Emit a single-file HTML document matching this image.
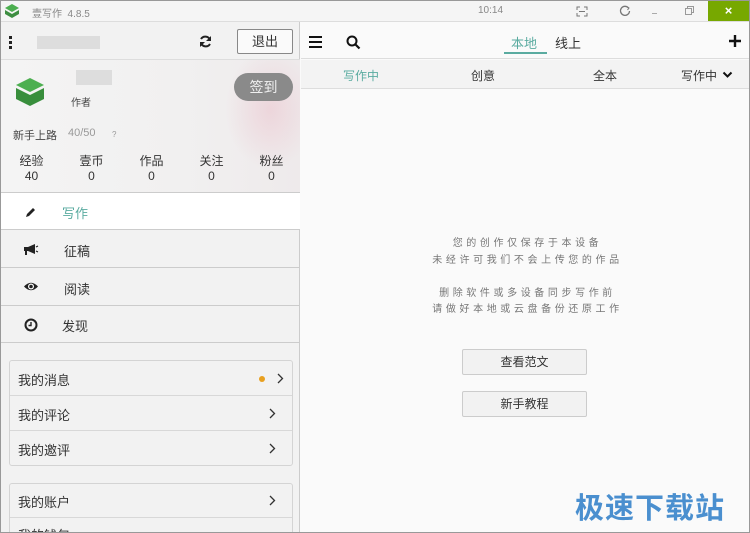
<!DOCTYPE html>
<html><head><meta charset="utf-8"><style>
*{box-sizing:border-box;margin:0;padding:0}
html,body{width:750px;height:533px;overflow:hidden}
body{font-family:"Liberation Sans","Noto Sans CJK SC",sans-serif;background:#fafafa;color:#333}
#w{position:relative;width:750px;height:533px;overflow:hidden}
.abs{position:absolute}
</style></head><body><div id="w">
<!-- title bar -->
<div class="abs" style="left:1px;top:1px;width:748px;height:21px;background:#f5f5f5;border-bottom:1px solid #ddd"></div>
<svg class="abs" style="left:4px;top:3px" width="16" height="16"><path d="M8 1L15 5L8 9L1 5Z" fill="#4caf50"/><path d="M1 7L8 11L15 7V11L8 15L1 11Z" fill="#3e8e41"/></svg>
<div class="abs" style="left:32px;top:5px;font-size:10px;color:#888">壹写作 &nbsp;4.8.5</div>
<div class="abs" style="left:478px;top:5px;font-size:10px;color:#888">10:14</div>
<svg class="abs" style="left:576px;top:6px" width="12" height="11"><path d="M1 4V1H4M8 1H11V4M11 7V10H8M4 10H1V7M3 5.5H9" stroke="#777" fill="none"/></svg>
<svg class="abs" style="left:619px;top:5px" width="12" height="12"><path d="M9.5 3A4.5 4.5 0 1 0 10.5 6" stroke="#777" stroke-width="1.3" fill="none"/><path d="M7.5 1.5L10 3L8.5 5" stroke="#777" fill="none"/></svg>
<div class="abs" style="left:652px;top:13px;width:5px;height:1px;background:#aaa"></div>
<svg class="abs" style="left:685px;top:6px" width="9" height="9"><path d="M0.5 2.5H6.5V8.5H0.5ZM2.5 2.5V0.5H8.5V6.5H6.5" stroke="#999" fill="none"/></svg>
<div class="abs" style="left:708px;top:1px;width:41px;height:20px;background:#77a800;color:#fff;font-size:13px;text-align:center;line-height:20px;font-weight:bold">×</div>
<!-- left panel -->
<div class="abs" style="left:1px;top:22px;width:299px;height:511px;background:#f2f2f2;border-right:1px solid #ccc"></div>
<div class="abs" style="left:1px;top:59px;width:299px;height:1px;background:#ddd"></div>
<div class="abs" style="left:9px;top:36px;width:3px;height:3px;background:#222;box-shadow:0 5px 0 #222,0 10px 0 #222"></div>
<div class="abs" style="left:37px;top:36px;width:63px;height:13px;background:#ddd"></div>
<svg class="abs" style="left:199px;top:35px" width="13" height="13"><path d="M11 5A5 5 0 0 0 2 4M2 8A5 5 0 0 0 11 9" stroke="#222" stroke-width="2" fill="none"/><path d="M12 1V6H7ZM1 12V7H6Z" fill="#222"/></svg>
<div class="abs" style="left:237px;top:29px;width:56px;height:25px;border:1px solid #888;border-radius:2px;background:#fafafa;font-size:13px;text-align:center;line-height:23px">退出</div>
<!-- profile -->
<div class="abs" style="left:1px;top:60px;width:299px;height:132px;background:linear-gradient(90deg,#f4f4f4 0%,#f1f0f0 60%,#eeeaeb 100%)"></div>
<div class="abs" style="left:225px;top:60px;width:75px;height:110px;background:radial-gradient(ellipse at 60% 45%,rgba(235,195,205,.55) 0%,rgba(240,200,210,0) 70%)"></div>
<svg class="abs" style="left:15px;top:77px" width="30" height="30"><path d="M15 1L29 8L15 15L1 8Z" fill="#4caf50"/><path d="M1 11L15 18L29 11V22L15 29L1 22Z" fill="#388e3c"/></svg>
<div class="abs" style="left:76px;top:70px;width:36px;height:15px;background:#ddd"></div>
<div class="abs" style="left:71px;top:94px;font-size:10px;color:#444">作者</div>
<div class="abs" style="left:234px;top:73px;width:59px;height:28px;border-radius:14px;background:#8a8a8a;color:#f0f0f0;font-size:14px;text-align:center;line-height:28px">签到</div>
<div class="abs" style="left:13px;top:127px;font-size:11px;color:#444">新手上路</div>
<div class="abs" style="left:68px;top:127px;font-size:11px;color:#999">40/50</div>
<div class="abs" style="left:112px;top:130px;font-size:8px;color:#999">?</div>
<div class="abs" style="left:0;top:154px;width:300px;font-size:12px;color:#333;line-height:15px">
<div class="abs" style="left:19px;width:25px;text-align:center">经验<br>40</div>
<div class="abs" style="left:79px;width:25px;text-align:center">壹币<br>0</div>
<div class="abs" style="left:139px;width:25px;text-align:center">作品<br>0</div>
<div class="abs" style="left:199px;width:25px;text-align:center">关注<br>0</div>
<div class="abs" style="left:259px;width:25px;text-align:center">粉丝<br>0</div>
</div>
<div class="abs" style="left:1px;top:192px;width:299px;height:1px;background:#ccc"></div>
<!-- menu -->
<div class="abs" style="left:1px;top:193px;width:299px;height:37px;background:#fff;border-bottom:1px solid #ccc"></div>
<svg class="abs" style="left:24px;top:206px" width="13" height="13"><path d="M2 11L3 8L9 2L11 4L5 10Z" fill="#222"/></svg>
<div class="abs" style="left:62px;top:203px;font-size:13px;color:#5aaba0">写作</div>
<div class="abs" style="left:1px;top:230px;width:299px;height:38px;border-bottom:1px solid #ccc"></div>
<svg class="abs" style="left:23px;top:243px" width="16" height="13"><path d="M1 4H5L12 1V11L5 8H4V12H2V8H1Z" fill="#222"/><path d="M13 4L15 3M13 8L15 9" stroke="#222"/></svg>
<div class="abs" style="left:64px;top:241px;font-size:13px">征稿</div>
<div class="abs" style="left:1px;top:268px;width:299px;height:38px;border-bottom:1px solid #ccc"></div>
<svg class="abs" style="left:23px;top:281px" width="16" height="11"><path d="M1 5.5Q8 -2 15 5.5Q8 13 1 5.5Z" fill="#222"/><circle cx="8" cy="5.5" r="3" fill="#fff"/><circle cx="8" cy="5.5" r="1.8" fill="#222"/></svg>
<div class="abs" style="left:64px;top:279px;font-size:13px">阅读</div>
<div class="abs" style="left:1px;top:306px;width:299px;height:37px;border-bottom:1px solid #ccc"></div>
<svg class="abs" style="left:24px;top:318px" width="14" height="14"><circle cx="7" cy="7" r="5.5" stroke="#222" stroke-width="2" fill="none"/><path d="M7 4V7.5H4.5" stroke="#222" stroke-width="1.4" fill="none"/></svg>
<div class="abs" style="left:62px;top:316px;font-size:13px">发现</div>
<!-- cards -->
<div class="abs" style="left:9px;top:360px;width:284px;height:106px;border:1px solid #d4d4d4;border-radius:3px;background:#f2f2f2"></div>
<div class="abs" style="left:10px;top:395px;width:282px;height:1px;background:#d8d8d8"></div>
<div class="abs" style="left:10px;top:430px;width:282px;height:1px;background:#d8d8d8"></div>
<div class="abs" style="left:18px;top:370px;font-size:13px">我的消息</div>
<div class="abs" style="left:259px;top:376px;width:6px;height:6px;border-radius:50%;background:#e8a020"></div>
<svg class="abs" style="left:277px;top:373px" width="7" height="11"><path d="M1 1L5.5 5.5L1 10" stroke="#333" stroke-width="1.3" fill="none"/></svg>
<div class="abs" style="left:18px;top:405px;font-size:13px">我的评论</div>
<svg class="abs" style="left:269px;top:408px" width="7" height="11"><path d="M1 1L5.5 5.5L1 10" stroke="#333" stroke-width="1.3" fill="none"/></svg>
<div class="abs" style="left:18px;top:440px;font-size:13px">我的邀评</div>
<svg class="abs" style="left:269px;top:443px" width="7" height="11"><path d="M1 1L5.5 5.5L1 10" stroke="#333" stroke-width="1.3" fill="none"/></svg>
<div class="abs" style="left:9px;top:483px;width:284px;height:60px;border:1px solid #d4d4d4;border-radius:3px;background:#f2f2f2"></div>
<div class="abs" style="left:10px;top:517px;width:282px;height:1px;background:#d8d8d8"></div>
<div class="abs" style="left:18px;top:492px;font-size:13px">我的账户</div>
<svg class="abs" style="left:269px;top:495px" width="7" height="11"><path d="M1 1L5.5 5.5L1 10" stroke="#333" stroke-width="1.3" fill="none"/></svg>
<div class="abs" style="left:18px;top:525px;font-size:13px">我的钱包</div>
<!-- right -->
<div class="abs" style="left:301px;top:22px;width:448px;height:37px;background:#fafafa;border-bottom:1px solid #ddd"></div>
<div class="abs" style="left:309px;top:36px;width:13px;height:2px;background:#111;box-shadow:0 5px 0 #111,0 10px 0 #111"></div>
<svg class="abs" style="left:346px;top:35px" width="15" height="15"><circle cx="6" cy="6" r="4.5" stroke="#111" stroke-width="2" fill="none"/><path d="M9.5 9.5L13.5 13.5" stroke="#111" stroke-width="2.2"/></svg>
<div class="abs" style="left:511px;top:33px;font-size:13px;color:#5aaba0">本地</div>
<div class="abs" style="left:504px;top:52px;width:43px;height:2px;background:#5aaba0"></div>
<div class="abs" style="left:555px;top:33px;font-size:13px">线上</div>
<svg class="abs" style="left:729px;top:35px" width="12" height="12"><path d="M6 0V12M0 6H12" stroke="#111" stroke-width="2.4"/></svg>
<div class="abs" style="left:301px;top:60px;width:448px;height:29px;background:#f3f3f3;border-bottom:1px solid #ddd"></div>
<div class="abs" style="left:343px;top:67px;font-size:12px;color:#5aaba0">写作中</div>
<div class="abs" style="left:471px;top:67px;font-size:12px">创意</div>
<div class="abs" style="left:593px;top:67px;font-size:12px">全本</div>
<div class="abs" style="left:681px;top:67px;font-size:12px">写作中</div>
<svg class="abs" style="left:722px;top:71px" width="11" height="8"><path d="M1.5 1.5L5.5 5.5L9.5 1.5" stroke="#111" stroke-width="2" fill="none"/></svg>
<div class="abs" style="left:390px;top:236px;width:272px;text-align:center;font-size:10px;color:#777;letter-spacing:3.6px;line-height:16.5px;padding-left:3px">您的创作仅保存于本设备<br>未经许可我们不会上传您的作品<br><br>删除软件或多设备同步写作前<br>请做好本地或云盘备份还原工作</div>
<div class="abs" style="left:462px;top:349px;width:125px;height:26px;border:1px solid #ccc;border-radius:2px;background:#f2f2f2;font-size:12px;text-align:center;line-height:24px">查看范文</div>
<div class="abs" style="left:462px;top:391px;width:125px;height:26px;border:1px solid #ccc;border-radius:2px;background:#f2f2f2;font-size:12px;text-align:center;line-height:24px">新手教程</div>
<div class="abs" style="left:575px;top:485px;font-size:29px;font-weight:bold;color:#4a8fcf;letter-spacing:1px">极速下载站</div>
<div class="abs" style="left:0;top:0;width:750px;height:533px;border:1px solid #999"></div>
</div></body></html>
